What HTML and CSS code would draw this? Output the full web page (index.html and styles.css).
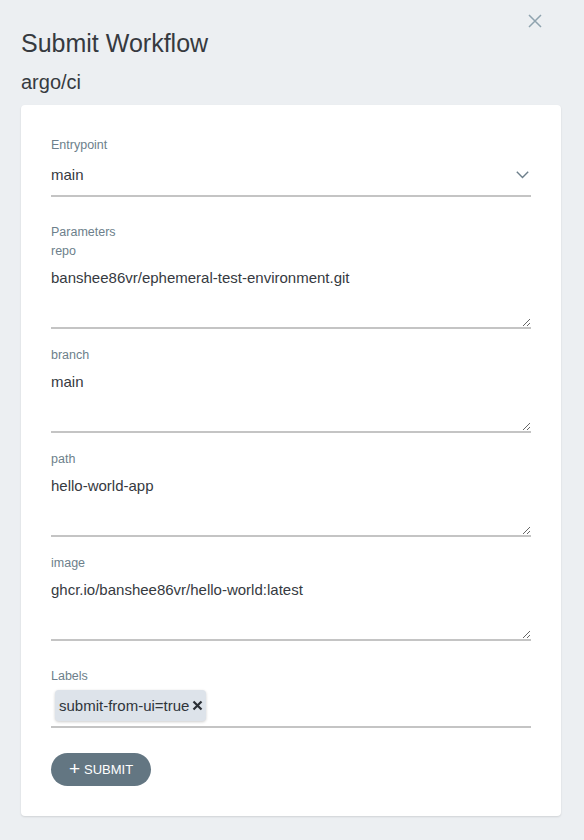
FILE: index.html
```html
<!DOCTYPE html>
<html>
<head>
<meta charset="utf-8">
<link rel="stylesheet" href="styles.css">
</head>
<body>
<div class="panel">
  <div class="close-row">
    <svg class="close" width="14" height="14" viewBox="0 0 14 14"><path d="M1 1 L13 13 M13 1 L1 13" stroke="#8fa3af" stroke-width="1.5" fill="none"/></svg>
  </div>
  <h1 class="title">Submit Workflow</h1>
  <div class="subtitle">argo/ci</div>
  <div class="card">
    <div class="label">Entrypoint</div>
    <div class="select">
      <span>main</span>
      <svg width="13" height="8" viewBox="0 0 13 8"><path d="M0.8 0.8 L6.5 6.5 L12.2 0.8" stroke="#6d7f8b" stroke-width="1.4" fill="none"/></svg>
    </div>
    <div class="label params-label">Parameters</div>
    <div class="param">
      <div class="label">repo</div>
      <textarea class="field">banshee86vr/ephemeral-test-environment.git</textarea>
    </div>
    <div class="param">
      <div class="label">branch</div>
      <textarea class="field">main</textarea>
    </div>
    <div class="param">
      <div class="label">path</div>
      <textarea class="field">hello-world-app</textarea>
    </div>
    <div class="param">
      <div class="label">image</div>
      <textarea class="field">ghcr.io/banshee86vr/hello-world:latest</textarea>
    </div>
    <div class="labels-section">
      <div class="label">Labels</div>
      <div class="tags">
        <span class="tag">submit-from-ui=true<svg width="11" height="11" viewBox="0 0 11 11"><path d="M1.5 1.5 L9.5 9.5 M9.5 1.5 L1.5 9.5" stroke="#2a2f35" stroke-width="2.2" fill="none"/></svg></span>
      </div>
    </div>
    <button class="submit"><span class="plus">+</span> SUBMIT</button>
  </div>
</div>
</body>
</html>
```
FILE: styles.css
```css
html, body {
  margin: 0;
  padding: 0;
  background: #eceff2;
  font-family: "Liberation Sans", Arial, sans-serif;
  color: #363a3f;
}
.panel {
  padding: 0 23px 0 21px;
  height: 840px;
  box-sizing: border-box;
}
.close-row {
  display: flex;
  justify-content: flex-end;
  padding: 14px 19px 0 0;
  height: 14px;
}
.close { display: block; }
.title {
  margin: 0;
  font-weight: normal;
  font-size: 25px;
  line-height: 30px;
  color: #363a3f;
}
.subtitle {
  font-size: 20px;
  line-height: 24px;
  margin-top: 12px;
  color: #363a3f;
}
.card {
  margin-top: 11px;
  width: 540px;
  box-sizing: border-box;
  background: #fff;
  border-radius: 4px;
  box-shadow: 0 1px 2px rgba(0,0,0,0.12);
  padding: 32px 30px 30px 30px;
}
.label {
  font-size: 12.5px;
  line-height: 16px;
  color: #6d7f8b;
}
.select {
  display: flex;
  align-items: center;
  justify-content: space-between;
  height: 41px;
  padding: 1px 2px 0 0;
  font-size: 15px;
  border-bottom: 2px solid #c4c4c4;
  color: #363a3f;
  box-sizing: content-box;
}
.select span { line-height: 20px; }
.params-label { margin-top: 27px; margin-bottom: 3px; }
.param { margin-bottom: 18px; }
.field {
  display: block;
  width: 100%;
  height: 70px;
  box-sizing: border-box;
  border: none;
  border-bottom: 2px solid #c4c4c4;
  padding: 9px 0 0 0;
  margin: 0;
  font-family: "Liberation Sans", Arial, sans-serif;
  font-size: 15px;
  line-height: 20px;
  color: #363a3f;
  background: #fff;
  outline: none;
}
.labels-section { margin-top: 27px; }
.tags {
  margin-top: 6px;
  padding: 0 0 5px 4px;
  border-bottom: 2px solid #c4c4c4;
  display: flex;
}
.tag {
  display: inline-flex;
  align-items: center;
  gap: 3px;
  height: 31px;
  box-sizing: border-box;
  padding: 0 3px 0 4px;
  background: #dde3ea;
  border-radius: 4px;
  box-shadow: 0 1px 3px rgba(0,0,0,0.2);
  font-size: 15px;
  color: #2f353b;
}
.submit {
  margin-top: 25px;
  display: inline-flex;
  align-items: center;
  height: 33px;
  width: 100px;
  justify-content: center;
  border: none;
  border-radius: 17px;
  background: #637682;
  color: #fff;
  font-family: "Liberation Sans", Arial, sans-serif;
  font-size: 13px;
  padding: 0;
  gap: 4px;
}
.plus { font-size: 19px; line-height: 1; margin-top: -2px; }
```
